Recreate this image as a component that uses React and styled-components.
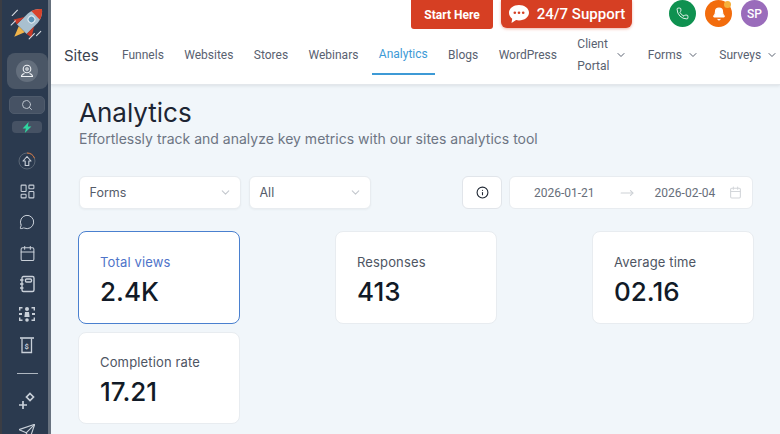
import React from 'react';
import styled, { createGlobalStyle } from 'styled-components';
import {
  Calendar,
  ChevronDown,
  Info,
  LayoutDashboard,
  MessageCircle,
  Phone,
  Search,
  Send,
  Bell,
  MoveRight,
} from 'lucide-react';

const GlobalStyle = createGlobalStyle`
  html, body {
    margin: 0;
    padding: 0;
    height: 100%;
    overflow: hidden;
    background: #f1f6fa;
  }
  * { box-sizing: border-box; }
`;

const Shell = styled.div`
  display: flex;
  width: 780px;
  height: 434px;
  overflow: hidden;
  font-family: Inter, "Liberation Sans", sans-serif;
`;

const Sidebar = styled.aside`
  flex: 0 0 51px;
  height: 434px;
  overflow: hidden;
  display: flex;
  flex-direction: column;
  align-items: center;
  padding: 6px 0 0 4px;
  background: #2b3a4f;
  border-left: 2px solid #3b3d44;
  border-right: 3px solid #68727f;
  color: #c9d0d9;
`;

const Logo = styled.svg`
  width: 36px;
  height: 36px;
  flex: none;
  margin-bottom: 11px;
`;

const AvatarTile = styled.div`
  flex: none;
  width: 41px;
  height: 36px;
  border-radius: 8px;
  background: #4a5666;
  display: flex;
  align-items: center;
  justify-content: center;
`;

const AvatarDisc = styled.div`
  width: 22px;
  height: 22px;
  border-radius: 50%;
  background: #646f7d;
  display: flex;
  align-items: center;
  justify-content: center;
  color: #eef1f4;
`;

const SearchPill = styled.div`
  flex: none;
  width: 36px;
  height: 18px;
  margin-top: 7px;
  border-radius: 5px;
  background: #465264;
  border: 1px solid #4f5b6c;
  display: flex;
  align-items: center;
  justify-content: center;
  color: #b9c1cb;
`;

const BoltPill = styled.div`
  flex: none;
  width: 30px;
  height: 12px;
  margin-top: 7px;
  margin-bottom: 13px;
  border-radius: 4px;
  background: #465264;
  display: flex;
  align-items: center;
  justify-content: center;
`;

const SideIcon = styled.div`
  flex: none;
  width: 100%;
  height: 30.6px;
  display: flex;
  align-items: center;
  justify-content: center;
  color: #c9d0d9;
`;

const SideRule = styled.div`
  flex: none;
  width: 21px;
  height: 1px;
  margin: 13px 0 12px;
  background: #aeb6c0;
`;

const Main = styled.div`
  flex: 1;
  min-width: 0;
  display: flex;
  flex-direction: column;
`;

const Header = styled.header`
  flex: none;
  height: 85px;
  background: #ffffff;
  border-bottom: 1px solid #e3e7eb;
  box-shadow: 0 1px 3px rgba(60, 70, 85, 0.12);
  overflow: hidden;
  position: relative;
  z-index: 1;
`;

const TopRow = styled.div`
  height: 32px;
  display: flex;
  align-items: flex-start;
  padding-left: 360px;
`;

const StartButton = styled.div`
  width: 82px;
  height: 29px;
  margin-right: 8px;
  border-radius: 0 0 3px 3px;
  background: #d63f23;
  color: #ffffff;
  font: 700 12px Roboto, sans-serif;
  display: flex;
  align-items: center;
  justify-content: center;
`;

const SupportButton = styled.div`
  width: 131px;
  height: 28px;
  margin-right: 37px;
  border-radius: 0 0 6px 6px;
  background: #d63f23;
  box-shadow: 0 1px 3px rgba(214, 63, 35, 0.4);
  color: #ffffff;
  font: 500 15px Roboto, sans-serif;
  display: flex;
  align-items: center;
  justify-content: center;
  gap: 7px;
`;

const RoundButton = styled.div`
  position: relative;
  width: 27px;
  height: 27px;
  margin-right: 9px;
  border-radius: 50%;
  background: ${props => props.$color};
  color: #ffffff;
  font: 500 12px Roboto, sans-serif;
  display: flex;
  align-items: center;
  justify-content: center;
`;

const Dot = styled.span`
  position: absolute;
  top: 1px;
  right: 1px;
  width: 7px;
  height: 7px;
  border-radius: 50%;
  background: #f5b13d;
`;

const NavRow = styled.nav`
  height: 52px;
  display: flex;
  align-items: center;
  padding-left: 13px;
  white-space: nowrap;
`;

const SiteTitle = styled.div`
  flex: none;
  width: 51px;
  margin-top: -6px;
  font: 400 15px Inter, sans-serif;
  color: #3b4350;
`;

const NavItem = styled.div`
  flex: none;
  height: 37px;
  margin-top: -4px;
  padding: 0 7px;
  margin-right: 6.4px;
  display: flex;
  align-items: center;
  gap: 5px;
  font: 400 12px/22px Roboto, sans-serif;
  color: ${props => (props.$active ? '#3d9ad6' : '#596170')};
  border-bottom: 2px solid ${props => (props.$active ? '#3d9ad6' : 'transparent')};
  padding-bottom: ${props => (props.$active ? '2px' : '0')};
`;

const Stacked = styled.span`
  display: block;
  width: 32px;
  margin-right: 1px;
  white-space: normal;
`;

const Content = styled.main`
  flex: 1;
  background: #f1f6fa;
  padding: 13px 0 0 28px;
  overflow: hidden;
`;

const Title = styled.h1`
  margin: 0;
  font: 400 26px/30px Inter, sans-serif;
  color: #1d2533;
`;

const Subtitle = styled.p`
  margin: 1px 0 0;
  font: 400 14px/20px Inter, sans-serif;
  color: #6d7583;
`;

const FilterRow = styled.div`
  display: flex;
  width: 676px;
  margin-top: 27px;
`;

const Select = styled.div`
  flex: none;
  width: ${props => props.$width}px;
  height: 33px;
  margin-right: 8px;
  padding: 0 8px 0 9.5px;
  display: flex;
  align-items: center;
  justify-content: space-between;
  background: #ffffff;
  border: 1px solid #e8ecf0;
  border-radius: 6px;
  font: 400 12.5px Inter, sans-serif;
  color: #555c69;
  box-shadow: 0 1px 2px rgba(60, 70, 85, 0.05);
`;

const InfoButton = styled.div`
  flex: none;
  width: 40px;
  height: 33px;
  margin-left: 83px;
  margin-right: 7px;
  display: flex;
  align-items: center;
  justify-content: center;
  background: #ffffff;
  border: 1px solid #e1e5ea;
  border-radius: 6px;
  color: #1f2733;
`;

const DateRange = styled.div`
  flex: none;
  width: 244px;
  height: 33px;
  padding: 0 0 0 24px;
  display: flex;
  align-items: center;
  background: #ffffff;
  border: 1px solid #e8ecf0;
  border-radius: 6px;
  font: 400 12px Roboto, sans-serif;
  color: #676e7a;
`;

const DateArrow = styled.span`
  display: flex;
  margin: 0 21px 0 25px;
  color: #cdd1d6;
`;

const DateIcon = styled.span`
  display: flex;
  margin-left: 14px;
  color: #d3d6da;
`;

const CardGrid = styled.div`
  display: grid;
  grid-template-columns: repeat(3, 162px);
  justify-content: space-between;
  row-gap: 8px;
  width: 676px;
  margin: 22px 0 0 -1px;
`;

const Card = styled.div`
  height: ${props => props.$height || 93}px;
  padding: ${props => props.$top || 21}px 21px 0;
  background: #ffffff;
  border: 1px solid ${props => (props.$active ? '#4a80cf' : '#e8ecf0')};
  border-radius: 8px;
`;

const CardLabel = styled.div`
  font: 400 13px/18px Inter, sans-serif;
  letter-spacing: 0.15px;
  color: ${props => (props.$active ? '#4f74c9' : '#4e5563')};
`;

const CardValue = styled.div`
  margin-top: 4px;
  font: 500 26px/34px Inter, sans-serif;
  color: #111a27;
`;

const NotebookIcon = () => (
  <svg width="18" height="18" viewBox="0 0 18 18" fill="none" stroke="currentColor" strokeWidth="1.4">
    <rect x="4" y="1.5" width="12" height="15" rx="1.5" />
    <rect x="7.5" y="4" width="6" height="3" rx="1" />
    <path d="M2 5h3.5M2 9h3.5M2 13h3.5" />
  </svg>
);

const NodesIcon = () => (
  <svg width="18" height="18" viewBox="0 0 18 18" fill="currentColor">
    <circle cx="9" cy="4" r="2" />
    <path d="M7 7h4l.6 5H6.400z" />
    <circle cx="9" cy="15" r="1.800" />
    <path d="M1 2h3.500v1.400H2.400V5.500H1zM17 2h-3.500v1.400h2.100V5.500H17zM1 16h3.500v-1.400H2.400V12.500H1zM17 16h-3.500v-1.400h2.100V12.500H17z" />
    <rect x="1" y="8" width="3" height="2" />
    <rect x="14" y="8" width="3" height="2" />
  </svg>
);

const DollarIcon = () => (
  <svg width="18" height="18" viewBox="0 0 18 18" fill="none" stroke="currentColor" strokeWidth="1.3">
    <path d="M2 2h14" strokeWidth="1.600" />
    <path d="M4 2.500v14h9.500v-14" />
    <text x="8.700" y="12.500" fontSize="7.500" fontWeight="700" textAnchor="middle" fontFamily="Roboto, sans-serif" fill="currentColor" stroke="none">$</text>
  </svg>
);

const SparkleIcon = () => (
  <svg width="20" height="20" viewBox="0 0 20 20" fill="none" stroke="currentColor" strokeWidth="1.700">
    <path d="M13 2.500l3.500 3.500-3.500 3.500L9.500 6z" />
    <path d="M6 10v8M2 14h8" />
  </svg>
);

const UpgradeRing = () => (
  <svg width="18" height="18" viewBox="0 0 18 18" fill="none">
    <circle cx="9" cy="9" r="8" stroke="#5a6675" strokeWidth="1" />
    <path d="M9 1a8 8 0 0 1 7.500 5.200" stroke="#d4743c" strokeWidth="1" />
    <path d="M9 4.500L13 9h-2.200v4.500H7.200V9H5z" stroke="#c9d0d9" strokeWidth="1.100" strokeLinejoin="round" />
  </svg>
);

const PinUser = () => (
  <svg width="14" height="14" viewBox="0 0 14 14" fill="none" stroke="currentColor" strokeWidth="1.100">
    <circle cx="7" cy="5" r="3.800" />
    <circle cx="7" cy="5" r="1.200" />
    <path d="M4.500 9.500C2.800 10 1.500 11 1.500 12.500h11c0-1.500-1.300-2.500-3-3" />
  </svg>
);

const Bolt = () => (
  <svg width="12" height="11" viewBox="0 0 10 10">
    <path d="M6.500 0L1 5.800h3L3 10l6-6H5.800z" fill="#2fd6a0" />
  </svg>
);

const Rocket = () => (
  <Logo viewBox="0 0 34 34">
    <g transform="rotate(45 17 17)">
      <path d="M17 -3c5 4 6.500 9 6.500 14v13h-13V11C10.500 6 12 1 17 -3z" fill="#a9c0cf" />
      <path d="M17 -3c3 2.500 5 5.500 5.800 8.500H11.200C12 2.500 14 -0.500 17 -3z" fill="#d8432b" />
      <circle cx="17" cy="11" r="3.200" fill="#5d93b5" stroke="#e4edf3" strokeWidth="1" />
      <path d="M10.500 14L5 23l5.500 1zM23.500 14L29 23l-5.500 1z" fill="#c93a28" />
      <path d="M13 24h8l-4 10z" fill="#f0b44a" />
    </g>
    <path d="M3 9l5-5M2 18l4-4M19 31l5-5M26 28l4-4" stroke="#d9dee4" strokeWidth="1" strokeLinecap="round" />
  </Logo>
);

const ChatBubble = () => (
  <svg width="22" height="20" viewBox="0 0 22 20">
    <path d="M11 1c5.500 0 10 3.300 10 7.700s-4.500 7.700-10 7.700c-1 0-2-.100-2.900-.300L3.500 19l.7-4.300C2.200 13.200 1 11.100 1 8.700 1 4.300 5.500 1 11 1z" fill="#ffffff" />
    <circle cx="6.800" cy="8.700" r="1.300" fill="#d63f23" />
    <circle cx="11" cy="8.700" r="1.300" fill="#d63f23" />
    <circle cx="15.200" cy="8.700" r="1.300" fill="#d63f23" />
  </svg>
);

const navItems = ['Funnels', 'Websites', 'Stores', 'Webinars'];

const stats = [
  { label: 'Total views', value: '2.4K', active: true },
  { label: 'Responses', value: '413' },
  { label: 'Average time', value: '02.16' },
  { label: 'Completion rate', value: '17.21', height: 92, top: 20 },
];

const App = () => (
  <Shell>
    <GlobalStyle />
    <Sidebar>
      <Rocket />
      <AvatarTile>
        <AvatarDisc><PinUser /></AvatarDisc>
      </AvatarTile>
      <SearchPill><Search size={12} /></SearchPill>
      <BoltPill><Bolt /></BoltPill>
      <SideIcon><UpgradeRing /></SideIcon>
      <SideIcon><LayoutDashboard size={17} strokeWidth={1.5} /></SideIcon>
      <SideIcon><MessageCircle size={16} strokeWidth={1.5} /></SideIcon>
      <SideIcon><Calendar size={17} strokeWidth={1.5} /></SideIcon>
      <SideIcon><NotebookIcon /></SideIcon>
      <SideIcon><NodesIcon /></SideIcon>
      <SideIcon><DollarIcon /></SideIcon>
      <SideRule />
      <SideIcon><SparkleIcon /></SideIcon>
      <SideIcon><Send size={18} strokeWidth={1.5} /></SideIcon>
    </Sidebar>
    <Main>
      <Header>
        <TopRow>
          <StartButton>Start Here</StartButton>
          <SupportButton><ChatBubble />24/7 Support</SupportButton>
          <RoundButton $color="#0f9150"><Phone size={13} strokeWidth={1.6} /></RoundButton>
          <RoundButton $color="#f26c0d"><Bell size={14} fill="#ffffff" /><Dot /></RoundButton>
          <RoundButton $color="#9a6cbb">SP</RoundButton>
        </TopRow>
        <NavRow>
          <SiteTitle>Sites</SiteTitle>
          {navItems.map(item => <NavItem key={item}>{item}</NavItem>)}
          <NavItem $active>Analytics</NavItem>
          <NavItem>Blogs</NavItem>
          <NavItem>WordPress</NavItem>
          <NavItem><Stacked>Client Portal</Stacked><ChevronDown size={12} /></NavItem>
          <NavItem>Forms<ChevronDown size={12} /></NavItem>
          <NavItem>Surveys<ChevronDown size={12} /></NavItem>
        </NavRow>
      </Header>
      <Content>
        <Title>Analytics</Title>
        <Subtitle>Effortlessly track and analyze key metrics with our sites analytics tool</Subtitle>
        <FilterRow>
          <Select $width={162}>Forms<ChevronDown size={13} color="#c4c8ce" /></Select>
          <Select $width={122}>All<ChevronDown size={13} color="#c4c8ce" /></Select>
          <InfoButton><Info size={13} /></InfoButton>
          <DateRange>
            2026-01-21
            <DateArrow><MoveRight size={14} /></DateArrow>
            2026-02-04
            <DateIcon><Calendar size={13} /></DateIcon>
          </DateRange>
        </FilterRow>
        <CardGrid>
          {stats.map(stat => (
            <Card key={stat.label} $active={stat.active} $height={stat.height} $top={stat.top}>
              <CardLabel $active={stat.active}>{stat.label}</CardLabel>
              <CardValue>{stat.value}</CardValue>
            </Card>
          ))}
        </CardGrid>
      </Content>
    </Main>
  </Shell>
);

export default App;
